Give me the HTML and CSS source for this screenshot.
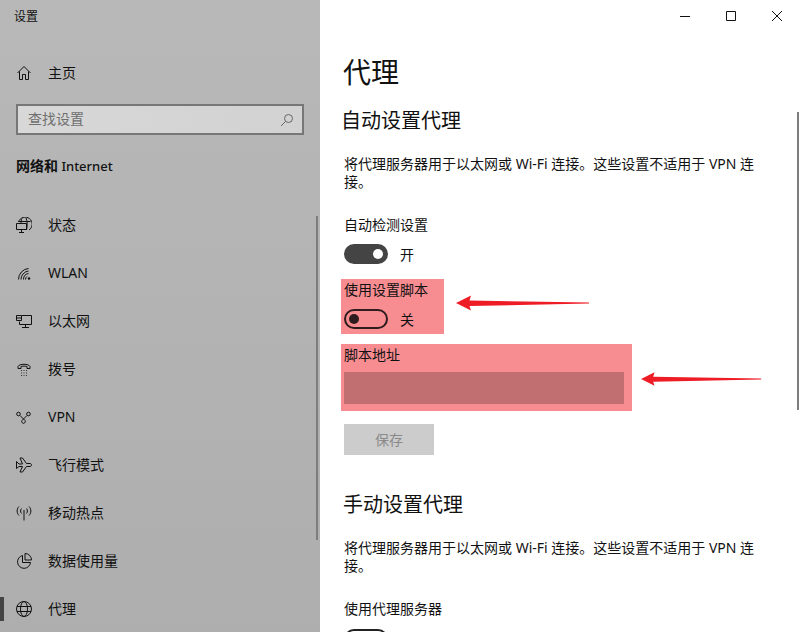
FILE: index.html
```html
<!DOCTYPE html>
<html lang="zh-CN">
<head>
<meta charset="utf-8">
<title>设置</title>
<link rel="stylesheet" href="styles.css">
</head>
<body>
<div class="window">
  <aside class="sidebar">
    <div class="app-title">设置</div>
    <div class="nav-item home">
      <svg class="icon" viewBox="0 0 16 16"><path d="M1.5 8 8 1.5 14.500 8M3.500 6.500V14.500H6.500V9.500H9.500V14.500H12.500V6.500"/></svg>
      <span>主页</span>
    </div>
    <div class="search">
      <span class="search-text">查找设置</span>
      <svg class="search-icon" viewBox="0 0 14 14"><circle cx="8.500" cy="5.500" r="4"/><path d="M5.500 8.500 1 13"/></svg>
    </div>
    <div class="section-name"><b>网络和</b> Internet</div>
    <nav class="nav">
      <div class="nav-item">
        <svg class="icon" viewBox="0 0 16 16"><path d="M2.500 5A7 7 0 1 1 13 13M2.500 4.500H14.500M6 1.500C5 3 5 5 5 6.500M10 1C11.500 4 11.500 9 10.500 13M.5 6.500H10.500V12.500H.5ZM5.500 12.500V15M3 15.500H8"/></svg>
        <span>状态</span>
      </div>
      <div class="nav-item">
        <svg class="icon" viewBox="0 0 16 16"><path d="M2.500 14.500A11 11 0 0 1 12.500 3.500M5 14.500A8.500 8.500 0 0 1 12.500 6M7.500 14.500A6 6 0 0 1 12.500 8.500M9.500 14.500A3.500 3.500 0 0 1 11 11.500"/><circle class="dot" cx="13" cy="13.500" r="1.200"/></svg>
        <span>WLAN</span>
      </div>
      <div class="nav-item">
        <svg class="icon" viewBox="0 0 16 16"><path d="M5.500 2.500H15.500V11.500H3.500V8.500M9.500 11.500V14.500M6 14.500H13M.5 2.500H5.500V7.500H.5ZM1 5H5"/></svg>
        <span>以太网</span>
      </div>
      <div class="nav-item">
        <svg class="icon" viewBox="0 0 16 16"><path d="M2 7.500V5.500C3 2.500 13 2.500 14 5.500V7.500H11V5.500C9.500 5 6.500 5 5 5.500V7.500Z"/><path class="dots" d="M5 9.500h1M7.500 9.500h1M10 9.500h1M5 12h1M7.500 12h1M10 12h1M5 14.500h1M7.500 14.500h1M10 14.500h1"/></svg>
        <span>拨号</span>
      </div>
      <div class="nav-item">
        <svg class="icon" viewBox="0 0 16 16"><circle cx="2.500" cy="5" r="1.800"/><circle cx="12.500" cy="5" r="1.800"/><path d="M4 6.500 9 11.500A1.800 1.800 0 1 1 6 11.500L11 6.500"/></svg>
        <span>VPN</span>
      </div>
      <div class="nav-item">
        <svg class="icon" viewBox="0 0 16 16"><path d="M.5 4.500 3 7H6.500L4 1H6.500L10.500 6.500H14C16 6.500 16 9.500 14 9.500H10.500L6.500 15H4L6.500 9.500H3L.5 11.500Z"/></svg>
        <span>飞行模式</span>
      </div>
      <div class="nav-item">
        <svg class="icon" viewBox="0 0 16 16"><path d="M8 5V15.500M3 1.500C.5 4 .5 8 3 10.500M13 1.500C15.500 4 15.500 8 13 10.500M5.500 3.500C4.300 5 4.300 7 5.500 8.500M10.500 3.500C11.700 5 11.700 7 10.500 8.500"/></svg>
        <span>移动热点</span>
      </div>
      <div class="nav-item">
        <svg class="icon" viewBox="0 0 16 16"><path d="M6.500 2.500A6.500 6.500 0 1 0 14.500 9.500H6.500ZM9 .5A6.500 6.500 0 0 1 15.500 7H9Z"/></svg>
        <span>数据使用量</span>
      </div>
      <div class="nav-item active">
        <svg class="icon" viewBox="0 0 16 16"><circle cx="8" cy="8" r="7.500"/><ellipse cx="8" cy="8" rx="3.500" ry="7.500"/><path d="M1 5.500H15M1 10.500H15"/></svg>
        <span>代理</span>
      </div>
    </nav>
    <div class="side-scroll"></div>
  </aside>

  <main class="content">
    <div class="titlebar">
      <svg class="win-btn" viewBox="0 0 46 32"><path d="M18 16.500H28"/></svg>
      <svg class="win-btn" viewBox="0 0 46 32"><path d="M18.500 11.500H27.500V20.500H18.500Z"/></svg>
      <svg class="win-btn" viewBox="0 0 46 32"><path d="M18 11 28 21M28 11 18 21"/></svg>
    </div>
    <h1>代理</h1>
    <h2>自动设置代理</h2>
    <p class="desc">将代理服务器用于以太网或 Wi-Fi 连接。这些设置不适用于 VPN 连接。</p>
    <div class="label auto-label">自动检测设置</div>
    <div class="toggle-row">
      <span class="toggle on"><i></i></span><span>开</span>
    </div>
    <section class="mark mark-script">
      <div class="label">使用设置脚本</div>
      <div class="toggle-row script-toggle">
        <span class="toggle off"><i></i></span><span>关</span>
      </div>
    </section>
    <section class="mark mark-address">
      <div class="label">脚本地址</div>
      <div class="address-input"></div>
    </section>
    <div class="save">保存</div>
    <h2 class="manual">手动设置代理</h2>
    <p class="desc">将代理服务器用于以太网或 Wi-Fi 连接。这些设置不适用于 VPN 连接。</p>
    <div class="label proxy-label">使用代理服务器</div>
    <span class="toggle plain"><i></i></span>
    <svg class="arrow arrow-one" viewBox="0 0 134 16"><path d="M0 8 15 .5 13.500 5.500 133 7.500V8.500L13.500 11 15 15.500Z"/></svg>
    <svg class="arrow arrow-two" viewBox="0 0 134 16"><path d="M0 8 15 .5 13.500 5.500 133 7.500V8.500L13.500 11 15 15.500Z"/></svg>
    <div class="main-scroll"></div>
  </main>
</div>
</body>
</html>
```
FILE: styles.css
```css
* { box-sizing: border-box; }
html, body { margin: 0; height: 100%; }
body {
  font-family: "Noto Sans", "Noto Sans CJK SC", sans-serif;
  font-size: 14px;
  color: #111;
  background: #fff;
}
.window { display: flex; width: 800px; height: 632px; overflow: hidden; }

.sidebar {
  position: relative;
  width: 320px;
  flex: none;
  padding: 8px 16px 0;
  background: linear-gradient(#b8b8b8, #aeaeae);
}
.app-title { font-size: 12px; line-height: 18px; margin-left: -2px; }
.nav-item {
  position: relative;
  display: flex;
  align-items: center;
  gap: 16px;
  height: 48px;
  line-height: 20px;
}
.nav-item.home { margin-top: 23px; }
.icon {
  width: 16px;
  height: 16px;
  flex: none;
  fill: none;
  stroke: #111;
  stroke-width: 1;
}
.icon .dot { fill: #111; stroke: none; }
.icon .dots { stroke-width: 1; stroke: #333; }
.search {
  display: flex;
  align-items: center;
  justify-content: space-between;
  height: 31px;
  margin-top: 7px;
  padding: 0 8px 0 10px;
  border: 2px solid #777;
  background: linear-gradient(90deg, #d8d8d8, #d2d2d2);
  color: #6f6f6f;
}
.search-text { padding-bottom: 3px; }
.search-icon { width: 14px; height: 14px; fill: none; stroke: #666; stroke-width: 1; }
.section-name { margin-top: 21px; line-height: 20px; font-size: 13px; font-weight: 500; }
.section-name b { font-size: 14px; font-weight: 700; }
.nav { margin-top: 25px; }
.nav-item.active::before {
  content: "";
  position: absolute;
  left: -16px;
  top: 12px;
  width: 4px;
  height: 24px;
  background: #444;
}
.side-scroll {
  position: absolute;
  top: 216px;
  right: 2px;
  width: 2px;
  height: 324px;
  background: #7d7d7d;
}

.content { position: relative; flex: 1; padding: 0 0 0 24px; }
.titlebar { display: flex; justify-content: flex-end; height: 32px; margin-right: 0; }
.win-btn { width: 46px; height: 32px; fill: none; stroke: #111; stroke-width: 1; }
h1 { margin: 20px 0 0 -1px; font-size: 28px; line-height: 40px; font-weight: 400; }
h2 { margin: 15px 0 0 -3px; font-size: 20px; line-height: 28px; font-weight: 400; }
h2.manual { margin: 36px 0 0 -1px; }
.desc { width: 420px; margin: 20px 0 0; line-height: 18px; }
.label { line-height: 20px; }
.auto-label { margin-top: 24px; }
.proxy-label { margin-top: 24px; }
.toggle-row { display: flex; align-items: center; gap: 12px; margin-top: 9px; height: 20px; }
.toggle {
  position: relative;
  display: block;
  width: 44px;
  height: 20px;
  border-radius: 10px;
  flex: none;
}
.toggle i {
  position: absolute;
  top: 5px;
  width: 10px;
  height: 10px;
  border-radius: 50%;
}
.toggle.on { background: #444; }
.toggle.on i { right: 5px; background: #fff; }
.toggle.off { border: 2px solid #2f1c1e; }
.toggle.off i { left: 3px; top: 3px; background: #2f1c1e; }
.toggle.plain { margin-top: 10px; border: 2px solid #222; }
.mark { background: #f88d91; margin-left: -3px; padding-left: 3px; }
.mark-script { width: 103px; height: 55px; margin-top: 15px; padding-top: 1px; }
.script-toggle { margin-top: 9px; }
.mark-address { width: 291px; height: 67px; margin-top: 10px; padding-top: 1px; }
.address-input { width: 280px; height: 32px; margin-top: 7px; background: #c26f72; }
.save {
  width: 90px;
  height: 31px;
  margin-top: 13px;
  background: #ccc;
  color: #8a8a8a;
  text-align: center;
  line-height: 31px;
}
.arrow { position: absolute; width: 134px; height: 16px; fill: #ee1c25; }
.arrow-one { left: 136px; top: 295px; }
.arrow-two { left: 321px; top: 371px; width: 121px; }
.main-scroll {
  position: absolute;
  top: 112px;
  right: 1px;
  width: 2px;
  height: 298px;
  background: #7d7d7d;
}
```
